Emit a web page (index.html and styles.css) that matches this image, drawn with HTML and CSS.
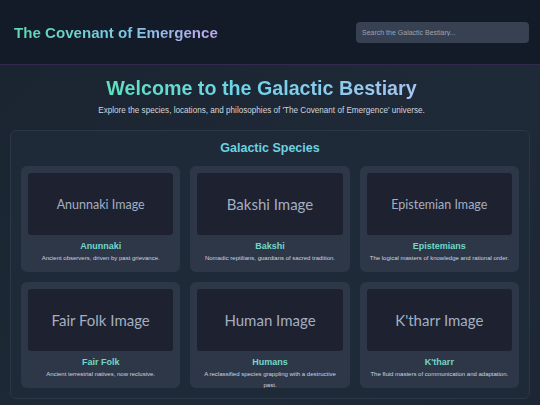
FILE: index.html
```html
<!DOCTYPE html>
<html lang="en">
<head>
<meta charset="utf-8">
<title>The Covenant of Emergence</title>
<link rel="stylesheet" href="styles.css">
</head>
<body>
<header class="site-header">
  <div class="brand">The Covenant of Emergence</div>
  <input class="search" type="text" placeholder="Search the Galactic Bestiary...">
</header>
<main class="main">
  <div class="hero">
    <h1 class="welcome">Welcome to the Galactic Bestiary</h1>
    <p class="intro">Explore the species, locations, and philosophies of 'The Covenant of Emergence' universe.</p>
  </div>
  <section class="panel">
    <h2 class="panel-title">Galactic Species</h2>
    <div class="grid">
      <div class="card"><div class="thumb">Anunnaki Image</div><div class="name">Anunnaki</div><p class="desc">Ancient observers, driven by past grievance.</p></div>
      <div class="card"><div class="thumb big">Bakshi Image</div><div class="name">Bakshi</div><p class="desc">Nomadic reptilians, guardians of sacred tradition.</p></div>
      <div class="card"><div class="thumb">Epistemian Image</div><div class="name">Epistemians</div><p class="desc">The logical masters of knowledge and rational order.</p></div>
      <div class="card"><div class="thumb big">Fair Folk Image</div><div class="name">Fair Folk</div><p class="desc">Ancient terrestrial natives, now reclusive.</p></div>
      <div class="card"><div class="thumb big">Human Image</div><div class="name">Humans</div><p class="desc">A reclassified species grappling with a destructive past.</p></div>
      <div class="card"><div class="thumb big">K'tharr Image</div><div class="name">K'tharr</div><p class="desc">The fluid masters of communication and adaptation.</p></div>
    </div>
  </section>
</main>
</body>
</html>
```

FILE: styles.css
```css
* { box-sizing: border-box; }
html, body { margin: 0; padding: 0; }
body {
  width: 540px;
  height: 405px;
  overflow: hidden;
  background: #1c2533;
  font-family: "Liberation Sans", Arial, sans-serif;
  color: #d1d5db;
}
.site-header {
  height: 65px;
  background: #131a28;
  border-bottom: 1px solid #33294f;
  display: flex;
  align-items: center;
  justify-content: space-between;
  padding: 0 10px 0 14px;
}
.brand {
  font-size: 15.1px;
  font-weight: bold;
  background: linear-gradient(90deg, #5fd9b3 0%, #7cc8e6 55%, #c0a6ea 100%);
  -webkit-background-clip: text;
  background-clip: text;
  color: transparent;
  margin-top: 1px;
}
.search {
  width: 173px;
  height: 21px;
  margin-right: 1px;
  border: none;
  border-radius: 4px;
  background: #374151;
  color: #d1d5db;
  font-family: "Liberation Sans", Arial, sans-serif;
  font-size: 7px;
  padding: 0 6px;
  outline: none;
}
.search::placeholder { color: #9aa3b2; }
.main {
  background: linear-gradient(135deg, #1b2431 0%, #1f2a38 60%, #1c2634 100%);
  padding: 11px 10px 0;
  height: 340px;
}
.hero {
  padding-right: 17px;
}
.welcome {
  font-size: 19.7px;
  font-weight: bold;
  line-height: 24px;
  text-align: center;
  background: linear-gradient(90deg, #5fe0c0 0%, #6fd3e8 45%, #a8c4f2 100%);
  background-clip: text;
  -webkit-background-clip: text;
  color: transparent;
  width: fit-content;
  margin: 0 auto;
}
.intro {
  margin: 6px 0 0;
  text-align: center;
  font-size: 8.15px;
  line-height: 10px;
  color: #d1d5db;
}
.panel {
  margin-top: 14px;
  background: #1f2a38;
  border: 1px solid #2b3646;
  border-radius: 6px;
  padding: 9px 10px 10px;
}
.panel-title {
  margin: 0 0 10px;
  text-align: center;
  font-size: 12.5px;
  line-height: 16px;
  color: #6bd3e3;
}
.grid {
  display: grid;
  grid-template-columns: repeat(3, 1fr);
  column-gap: 10px;
  row-gap: 10px;
}
.card {
  background: #2d3748;
  border-radius: 6px;
  padding: 7px 7px 8px;
  height: 106px;
  text-align: center;
}
.thumb {
  height: 62px;
  background: #1e212f;
  border-radius: 3px;
  display: flex;
  align-items: center;
  justify-content: center;
  font-family: Lato, "Liberation Sans", sans-serif;
  font-size: 12.5px;
  color: #a3afc1;
}
.thumb.big { font-size: 15px; }
.name {
  margin-top: 5px;
  font-size: 9px;
  font-weight: bold;
  color: #72d8c8;
  line-height: 12px;
}
.desc {
  margin: 1px 0 0;
  font-size: 6px;
  line-height: 11px;
  color: #cbd5e0;
}
```
